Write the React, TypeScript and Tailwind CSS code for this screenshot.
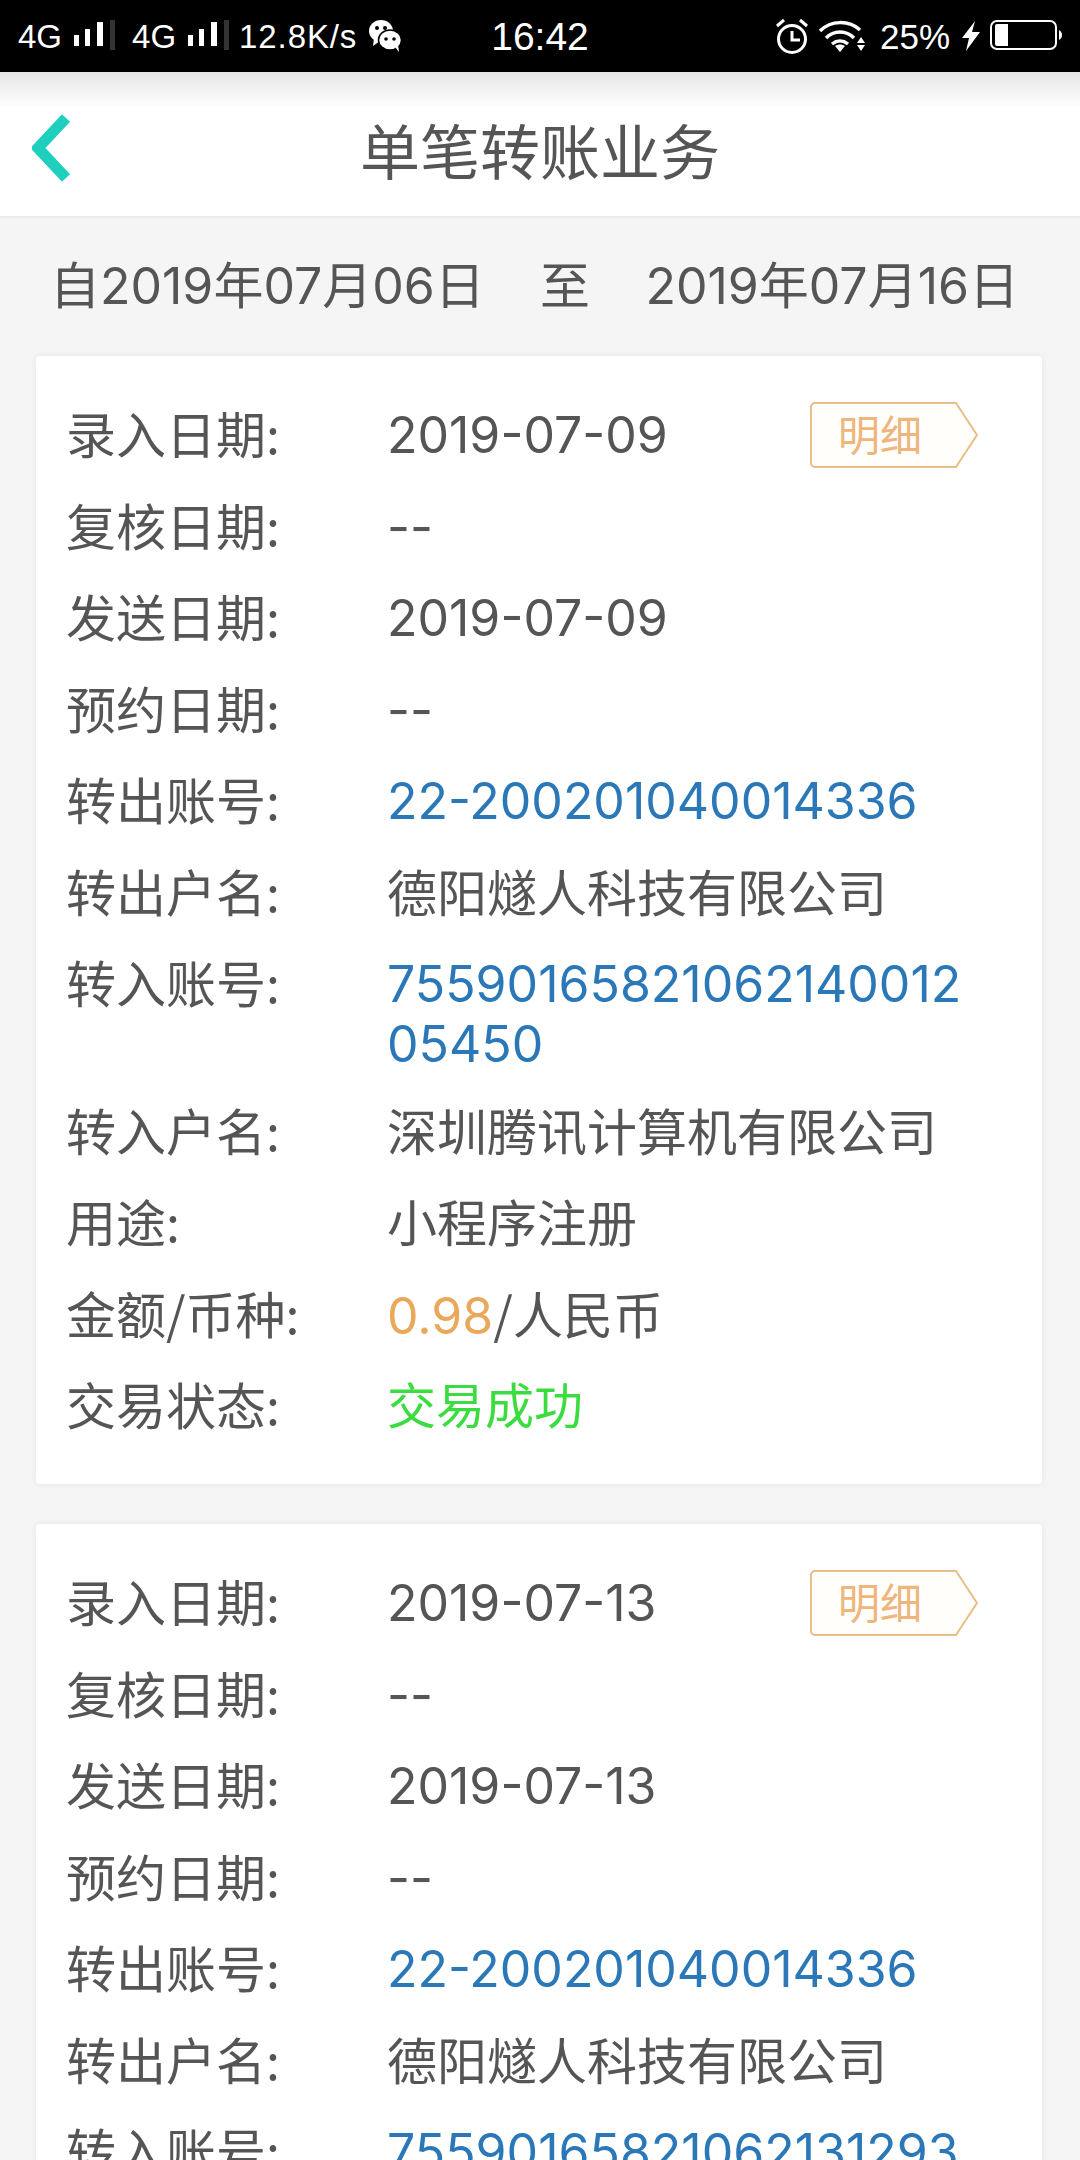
type Row = {
  label: string;
  value: string;
  tone?: "blue" | "green";
  amount?: string;
};

type Transfer = {
  rows: Row[];
};

const transfers: Transfer[] = [
  {
    rows: [
      { label: "录入日期:", value: "2019-07-09" },
      { label: "复核日期:", value: "--" },
      { label: "发送日期:", value: "2019-07-09" },
      { label: "预约日期:", value: "--" },
      { label: "转出账号:", value: "22-200201040014336", tone: "blue" },
      { label: "转出户名:", value: "德阳燧人科技有限公司" },
      { label: "转入账号:", value: "7559016582106214001205450", tone: "blue" },
      { label: "转入户名:", value: "深圳腾讯计算机有限公司" },
      { label: "用途:", value: "小程序注册" },
      { label: "金额/币种:", value: "/人民币", amount: "0.98" },
      { label: "交易状态:", value: "交易成功", tone: "green" },
    ],
  },
  {
    rows: [
      { label: "录入日期:", value: "2019-07-13" },
      { label: "复核日期:", value: "--" },
      { label: "发送日期:", value: "2019-07-13" },
      { label: "预约日期:", value: "--" },
      { label: "转出账号:", value: "22-200201040014336", tone: "blue" },
      { label: "转出户名:", value: "德阳燧人科技有限公司" },
      { label: "转入账号:", value: "75590165821062131293", tone: "blue" },
    ],
  },
];

const SignalBars = () => (
  <svg width="42" height="32" viewBox="0 0 42 32" className="shrink-0">
    <rect x="0" y="15" width="5" height="11" fill="#fff" />
    <rect x="11" y="9" width="5" height="17" fill="#fff" />
    <rect x="23" y="2" width="6" height="24" fill="#fff" />
    <rect x="36" y="0" width="5" height="30" fill="#333" />
  </svg>
);

const WeChatIcon = () => (
  <svg width="34" height="34" viewBox="0 0 34 34" className="shrink-0">
    <ellipse cx="13" cy="12" rx="12" ry="11" fill="#fff" />
    <path d="M6 19l-1 8 7-5z" fill="#fff" />
    <circle cx="9" cy="9" r="2" fill="#000" />
    <circle cx="17" cy="9" r="2" fill="#000" />
    <ellipse cx="22" cy="21" rx="11.5" ry="10" fill="#fff" stroke="#000" strokeWidth="1.5" />
    <path d="M27 28l4 5-1-8z" fill="#fff" />
    <circle cx="18" cy="20" r="1.8" fill="#000" />
    <circle cx="26" cy="20" r="1.8" fill="#000" />
  </svg>
);

const AlarmIcon = () => (
  <svg width="34" height="36" viewBox="0 0 34 36" fill="none" stroke="#fff" className="shrink-0">
    <circle cx="17" cy="21" r="13.5" strokeWidth="3" />
    <path d="M17 13v9h8" strokeWidth="3" />
    <path d="M2 8l7-6M32 8l-7-6" strokeWidth="3" />
  </svg>
);

const WifiIcon = () => (
  <svg width="46" height="34" viewBox="0 0 46 34" fill="none" stroke="#fff" className="shrink-0">
    <path d="M1 12C12 1 30 1 41 11" strokeWidth="3.5" />
    <path d="M7 19c8-8 20-8 28 0" strokeWidth="3.5" />
    <path d="M13 25c5-4 11-4 16 0" strokeWidth="3.5" />
    <path d="M16 27c3-2 7-2 10 0l-5 6z" fill="#fff" stroke="none" />
    <path d="M42 18l4 6h-8zM38 26h8l-4 6z" fill="#fff" stroke="none" />
  </svg>
);

const BoltIcon = () => (
  <svg width="18" height="30" viewBox="0 0 18 30" className="shrink-0">
    <path d="M13 0L0 17h7l-3 13L18 11h-8z" fill="#fff" />
  </svg>
);

const BatteryIcon = () => (
  <svg width="72" height="32" viewBox="0 0 72 32" className="shrink-0">
    <rect x="1" y="1" width="65" height="28" rx="6" fill="none" stroke="#fff" strokeWidth="2" />
    <path d="M5 6a2 2 0 0 1 2-2h11v22H7a2 2 0 0 1-2-2z" fill="#fff" />
    <path d="M69 10c2 1 3 3 3 5s-1 4-3 5z" fill="#fff" />
  </svg>
);

const StatusBar = () => (
  <div className="flex h-[72px] shrink-0 items-center bg-black font-['Liberation_Sans',sans-serif] text-white">
    <div className="flex flex-1 items-center pl-[18px] text-[33px] leading-none">
      <span>4G</span>
      <span className="ml-[12px]">
        <SignalBars />
      </span>
      <span className="ml-[16px]">4G</span>
      <span className="ml-[12px]">
        <SignalBars />
      </span>
      <span className="ml-[9px] tracking-[0.9px]">12.8K/s</span>
      <span className="ml-[11px]">
        <WeChatIcon />
      </span>
    </div>
    <span className="text-[39px] leading-none">16:42</span>
    <div className="flex flex-1 items-center justify-end gap-[10px] pr-[18px] text-[35px] leading-none">
      <AlarmIcon />
      <WifiIcon />
      <span className="ml-[5px]">25%</span>
      <span className="ml-[2px]">
        <BoltIcon />
      </span>
      <BatteryIcon />
    </div>
  </div>
);

const NavBar = () => (
  <div className="flex h-[146px] shrink-0 items-center border-b-2 border-[#ececec] bg-gradient-to-b from-[#e6e6e6] via-white via-[25%] to-white pl-[32px] pr-[68px] pt-[10px]">
    <svg width="40" height="68" viewBox="0 0 40 68" fill="none" className="-mt-[2px] shrink-0">
      <path d="M34 4L6 34l28 30" stroke="#1fcfbe" strokeWidth="11" />
    </svg>
    <h1 className="flex-1 pr-[4px] text-center text-[60px] font-normal leading-none text-[#555]">
      单笔转账业务
    </h1>
  </div>
);

const DetailTag = () => (
  <div className="relative -mb-[6px] mr-[39px] h-[66px] w-[168px] shrink-0">
    <svg width="168" height="66" viewBox="0 0 168 66" fill="none" className="absolute inset-0">
      <path
        d="M5 1H146L167 33 146 65H5a4 4 0 0 1-4-4V5a4 4 0 0 1 4-4z"
        stroke="#e9bd87"
        strokeWidth="2"
        fill="#fffefb"
      />
    </svg>
    <span className="absolute left-[28px] top-[7px] text-[42px] leading-[48px] text-[#eeb67c]">
      明细
    </span>
  </div>
);

// numeric values sit a little high in Inter next to the CJK labels
const valueFont = (row: Row) =>
  /[-\d]/.test(row.value) ? "translate-y-[3px] font-['Inter',sans-serif]" : "";

const rowTone = (row: Row) => {
  if (row.tone === "blue") return "text-[#2a78b8]";
  if (row.tone === "green") return "text-[#3bdc3f] text-[49px]";
  return "text-[#555]";
};

const TransferCard = ({ rows }: Transfer) => (
  <div className="flex flex-col gap-[31.5px] rounded-[3px] bg-white pb-[51px] pl-[30px] pr-[25px] pt-[46px] shadow-[0_0_6px_rgba(0,0,0,0.07)]">
    {rows.map((row, i) => (
      <div
        key={row.label}
        className={`flex items-start text-[50px] leading-[60px] ${row.value.length > 20 ? "-mb-[4px]" : ""}`}
      >
        <span className="w-[321px] shrink-0 text-[#555]">{row.label}</span>
        <span className={`min-w-0 flex-1 break-all pr-[32px] ${valueFont(row)} ${rowTone(row)}`}>
          {row.amount && (
            <span className="font-['Inter',sans-serif] leading-none text-[#e9a85a]">
              {row.amount}
            </span>
          )}
          {row.value}
        </span>
        {i === 0 && <DetailTag />}
      </div>
    ))}
  </div>
);

export default function App() {
  return (
    <div className="flex h-[2160px] w-[1080px] flex-col overflow-hidden bg-[#f5f5f5] font-['Noto_Sans_CJK_SC',sans-serif]">
      <StatusBar />
      <NavBar />
      <div className="flex h-[138px] shrink-0 items-center justify-between pb-[2px] pl-[50px] pr-[61px] font-['Inter','Noto_Sans_CJK_SC',sans-serif] text-[50px] leading-none text-[#555]">
        <span>自2019年07月06日</span>
        <span>至</span>
        <span>2019年07月16日</span>
      </div>
      <div className="flex flex-col gap-[40px] pl-[36px] pr-[38px]">
        {transfers.map((transfer) => (
          <TransferCard key={transfer.rows[0].value} rows={transfer.rows} />
        ))}
      </div>
    </div>
  );
}
